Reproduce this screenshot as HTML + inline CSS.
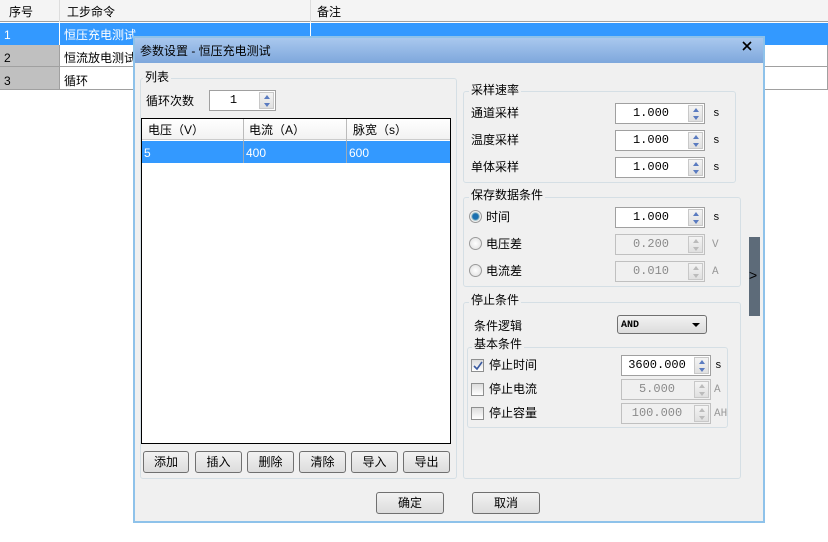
<!DOCTYPE html>
<html><head><meta charset="utf-8"><style>
*{box-sizing:border-box;margin:0;padding:0}
body{width:828px;height:542px;background:#fff;position:relative;overflow:hidden;font-family:"Liberation Sans","Noto Sans CJK SC",sans-serif;font-size:12px;color:#000}
.a{position:absolute}
.c{position:absolute;white-space:nowrap;line-height:14px}
.gb{position:absolute;border:1px solid #d5dfe5;border-radius:3px}
.gl{position:absolute;background:#f0f0f0;padding:0 2px;line-height:14px;font-size:12px}
.sp{position:absolute;height:21px;border:1px solid #a0a0a0;background:#fff}
.sp .v{position:absolute;left:0;right:18px;text-align:center;top:2px;font-family:"Liberation Mono",monospace;font-size:12px}
.sp .b{position:absolute;right:1px;top:1px;width:15px;height:17px;border:1px solid #c8c8c8;background:linear-gradient(#f4f4f4,#e0e0e0)}
.sp .b:before{content:"";position:absolute;left:4px;top:2px;border:3px solid transparent;border-bottom:4px solid #5a7bc0;border-top:0}
.sp .b:after{content:"";position:absolute;left:4px;top:10px;border:3px solid transparent;border-top:4px solid #5a7bc0;border-bottom:0}
.sp.d{background:#f0f0f0;border-color:#c0c0c0}
.sp.d .v{color:#8a8a8a}
.sp.d .b:before{border-bottom-color:#bbb}.sp.d .b:after{border-top-color:#bbb}
.btn{position:absolute;height:22px;border:1px solid #707070;border-radius:3px;background:linear-gradient(#f2f2f2,#dcdcdc);text-align:center;line-height:20px;font-size:12px}
.u{position:absolute;font-family:"Liberation Mono",monospace;font-size:11px}
.rb{position:absolute;width:13px;height:13px;border-radius:50%;border:1px solid #9a9a9a;background:radial-gradient(#fff,#ddd)}
.cb{position:absolute;width:13px;height:13px;border:1px solid #8e8f8f;background:linear-gradient(#dcdcdc,#fff)}
</style></head><body>
<div class="a" style="left:0;top:0;width:828px;height:22px;background:#f4f4f4;border-bottom:1px solid #a0a0a0"></div>
<div class="a" style="left:59px;top:0;width:1px;height:22px;background:#ddd"></div>
<div class="a" style="left:310px;top:0;width:1px;height:22px;background:#ddd"></div>
<div class="c" style="left:9px;top:5px">序号</div>
<div class="c" style="left:67px;top:5px">工步命令</div>
<div class="c" style="left:317px;top:5px">备注</div>
<div class="a" style="left:0;top:23px;width:828px;height:22px;background:#3399ff"></div>
<div class="a" style="left:59px;top:23px;width:1px;height:22px;background:#fff"></div>
<div class="a" style="left:310px;top:23px;width:1px;height:22px;background:#fff"></div>
<div class="c" style="left:4px;top:28px;color:#fff">1</div>
<div class="c" style="left:64px;top:28px;color:#fff">恒压充电测试</div>
<div class="a" style="left:0;top:45px;width:59px;height:22px;background:#c0c0c0;border-bottom:1px solid #a0a0a0"></div>
<div class="a" style="left:0;top:67px;width:59px;height:23px;background:#c0c0c0;border-bottom:1px solid #a0a0a0"></div>
<div class="a" style="left:59px;top:45px;width:769px;height:22px;border-bottom:1px solid #a0a0a0;border-left:1px solid #a0a0a0;border-right:1px solid #a0a0a0"></div>
<div class="a" style="left:59px;top:67px;width:769px;height:23px;border-bottom:1px solid #a0a0a0;border-left:1px solid #a0a0a0;border-right:1px solid #a0a0a0"></div>
<div class="c" style="left:4px;top:51px">2</div>
<div class="c" style="left:64px;top:51px">恒流放电测试</div>
<div class="c" style="left:4px;top:74px">3</div>
<div class="c" style="left:64px;top:74px">循环</div>

<div class="a" style="left:133px;top:36px;width:632px;height:487px;background:#f0f0f0;border:2px solid #8ec2ea"></div>
<div class="a" style="left:135px;top:38px;width:628px;height:25px;background:linear-gradient(#a9c8ee,#7ea7dc)"></div>
<div class="c" style="left:140px;top:44px">参数设置 - 恒压充电测试</div>
<svg class="a" style="left:742px;top:41px" width="10" height="10"><path d="M1 1L9 9M9 1L1 9" stroke="#000" stroke-width="1.6"/></svg>

<div class="gb" style="left:140px;top:78px;width:317px;height:401px"></div>
<div class="gl" style="left:143px;top:70px">列表</div>
<div class="c" style="left:146px;top:94px">循环次数</div>
<div class="sp" style="left:209px;top:90px;width:67px"><span class="v">1</span><span class="b"></span></div>
<div class="a" style="left:141px;top:118px;width:310px;height:326px;background:#fff;border:1px solid #000"></div>
<div class="a" style="left:142px;top:119px;width:308px;height:21px;background:linear-gradient(#fff,#f2f2f2);border-bottom:1px solid #ccc"></div>
<div class="a" style="left:243px;top:119px;width:1px;height:44px;background:#bbb"></div>
<div class="a" style="left:346px;top:119px;width:1px;height:44px;background:#bbb"></div>
<div class="c" style="left:148px;top:123px">电压（V）</div>
<div class="c" style="left:249px;top:123px">电流（A）</div>
<div class="c" style="left:353px;top:123px">脉宽（s）</div>
<div class="a" style="left:142px;top:141px;width:308px;height:22px;background:#3399ff"></div>
<div class="a" style="left:243px;top:141px;width:1px;height:22px;background:#9ab"></div>
<div class="a" style="left:346px;top:141px;width:1px;height:22px;background:#9ab"></div>
<div class="c" style="left:144px;top:146px;color:#fff">5</div>
<div class="c" style="left:246px;top:146px;color:#fff">400</div>
<div class="c" style="left:349px;top:146px;color:#fff">600</div>
<div class="btn" style="left:143px;top:451px;width:46px">添加</div>
<div class="btn" style="left:195px;top:451px;width:47px">插入</div>
<div class="btn" style="left:247px;top:451px;width:47px">删除</div>
<div class="btn" style="left:299px;top:451px;width:47px">清除</div>
<div class="btn" style="left:351px;top:451px;width:47px">导入</div>
<div class="btn" style="left:403px;top:451px;width:47px">导出</div>

<div class="gb" style="left:463px;top:91px;width:273px;height:92px"></div>
<div class="gl" style="left:469px;top:83px">采样速率</div>
<div class="c" style="left:471px;top:106px">通道采样</div>
<div class="sp" style="left:615px;top:103px;width:90px"><span class="v">1.000</span><span class="b"></span></div>
<div class="u" style="left:713px;top:108px">s</div>
<div class="c" style="left:471px;top:133px">温度采样</div>
<div class="sp" style="left:615px;top:130px;width:90px"><span class="v">1.000</span><span class="b"></span></div>
<div class="u" style="left:713px;top:135px">s</div>
<div class="c" style="left:471px;top:160px">单体采样</div>
<div class="sp" style="left:615px;top:157px;width:90px"><span class="v">1.000</span><span class="b"></span></div>
<div class="u" style="left:713px;top:162px">s</div>

<div class="gb" style="left:463px;top:197px;width:278px;height:90px"></div>
<div class="gl" style="left:469px;top:188px">保存数据条件</div>
<div class="rb" style="left:469px;top:210px;background:radial-gradient(#1a6fb0 35%,#7ab 45%,#eee 60%)"></div>
<div class="c" style="left:486px;top:210px">时间</div>
<div class="sp" style="left:615px;top:207px;width:90px"><span class="v">1.000</span><span class="b"></span></div>
<div class="u" style="left:713px;top:212px">s</div>
<div class="rb" style="left:469px;top:237px"></div>
<div class="c" style="left:486px;top:237px">电压差</div>
<div class="sp d" style="left:615px;top:234px;width:90px"><span class="v">0.200</span><span class="b"></span></div>
<div class="u" style="left:712px;top:239px;color:#999">V</div>
<div class="rb" style="left:469px;top:264px"></div>
<div class="c" style="left:486px;top:264px">电流差</div>
<div class="sp d" style="left:615px;top:261px;width:90px"><span class="v">0.010</span><span class="b"></span></div>
<div class="u" style="left:712px;top:266px;color:#999">A</div>

<div class="a" style="left:749px;top:237px;width:11px;height:79px;background:#5d6b79"></div>
<div class="c" style="left:749px;top:268px;font-size:14px">&gt;</div>

<div class="gb" style="left:463px;top:302px;width:278px;height:177px"></div>
<div class="gl" style="left:469px;top:293px">停止条件</div>
<div class="c" style="left:474px;top:319px">条件逻辑</div>
<div class="a" style="left:617px;top:315px;width:90px;height:19px;border:1px solid #707070;border-radius:3px;background:linear-gradient(#f2f2f2,#dcdcdc)"></div>
<div class="c" style="left:621px;top:319px;font-family:'Liberation Mono',monospace;font-size:10px;font-weight:bold">AND</div>
<div class="a" style="left:692px;top:323px;border:4px solid transparent;border-top:4px solid #000;border-bottom:0"></div>
<div class="gb" style="left:467px;top:347px;width:261px;height:81px"></div>
<div class="gl" style="left:472px;top:337px">基本条件</div>
<div class="cb" style="left:471px;top:359px"></div>
<svg class="a" style="left:473px;top:361px" width="10" height="10"><path d="M1 5L4 8L9 1" stroke="#3a5aa0" stroke-width="1.6" fill="none"/></svg>
<div class="c" style="left:489px;top:358px">停止时间</div>
<div class="sp" style="left:621px;top:355px;width:90px"><span class="v">3600.000</span><span class="b"></span></div>
<div class="u" style="left:715px;top:360px">s</div>
<div class="cb" style="left:471px;top:383px"></div>
<div class="c" style="left:489px;top:382px">停止电流</div>
<div class="sp d" style="left:621px;top:379px;width:90px"><span class="v">5.000</span><span class="b"></span></div>
<div class="u" style="left:714px;top:384px;color:#999">A</div>
<div class="cb" style="left:471px;top:407px"></div>
<div class="c" style="left:489px;top:406px">停止容量</div>
<div class="sp d" style="left:621px;top:403px;width:90px"><span class="v">100.000</span><span class="b"></span></div>
<div class="u" style="left:714px;top:408px;color:#999">AH</div>

<div class="btn" style="left:376px;top:492px;width:68px">确定</div>
<div class="btn" style="left:472px;top:492px;width:68px">取消</div>
</body></html>
